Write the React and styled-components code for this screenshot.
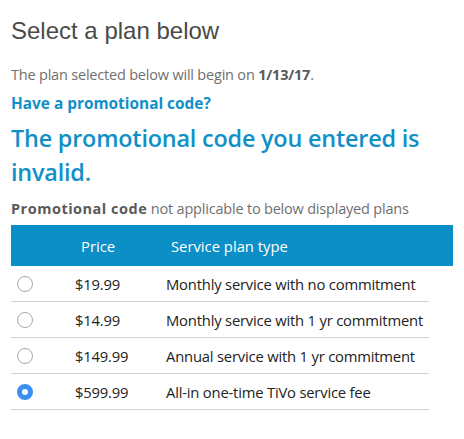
import React, { useState } from "react";
import styled, { createGlobalStyle } from "styled-components";

const PLANS = [
  { id: "m0", price: "$19.99", type: "Monthly service with no commitment" },
  { id: "m1", price: "$14.99", type: "Monthly service with 1 yr commitment" },
  { id: "a1", price: "$149.99", type: "Annual service with 1 yr commitment" },
  { id: "all", price: "$599.99", type: "All-in one-time TiVo service fee" },
];

const GlobalStyle = createGlobalStyle`
  body {
    margin: 0;
    background: #ffffff;
    font-family: "Open Sans", "Liberation Sans", sans-serif;
  }
`;

const Page = styled.div`
  padding: 15px 11px 0 11px;
`;

const Title = styled.h1`
  margin: 0;
  font-family: "Liberation Sans", Arial, sans-serif;
  font-weight: 400;
  font-size: 24px;
  line-height: 32px;
  color: #4a4a4a;
`;

const Note = styled.p`
  margin: ${(p) => p.$top}px 0 0 0;
  font-size: 14.5px;
  line-height: 20px;
  color: #707070;
  letter-spacing: -0.2px;

  b {
    color: #5a5a5a;
    font-weight: 700;
    letter-spacing: ${(p) => (p.$wideBold ? "0.5px" : "-0.2px")};
  }
`;

const PromoLink = styled.a`
  display: block;
  margin-top: 9px;
  font-size: 15.4px;
  line-height: 20px;
  font-weight: 700;
  color: #1190c8;
  text-decoration: none;
`;

const Error = styled.h2`
  margin: 7px 0 0 0;
  font-size: 23.4px;
  line-height: 34px;
  font-weight: 600;
  color: #1190c8;
  letter-spacing: -0.2px;
`;

const Table = styled.div`
  margin-top: 6px;
  width: 442px;
`;

const Head = styled.div`
  display: grid;
  grid-template-columns: 70px 90px 1fr;
  align-items: center;
  height: 41px;
  background: #0b8fc6;
  color: #ffffff;
  font-size: 14.8px;
`;

const Row = styled.label`
  display: grid;
  grid-template-columns: 64px 91px 1fr;
  align-items: center;
  height: 35px;
  width: 418px;
  border-bottom: 1px solid #d4d4d4;
  font-size: 14.8px;
  color: #222222;
  letter-spacing: -0.2px;
  cursor: pointer;
`;

const Radio = styled.span`
  width: 16px;
  height: 16px;
  margin-left: 6px;
  box-sizing: border-box;
  border-radius: 50%;
  border: ${(p) => (p.$on ? "5px solid #3a8ff5" : "1px solid #a8a8a8")};
  background: #ffffff;
`;

export default function App() {
  const [plan, setPlan] = useState("all");
  return (
    <Page>
      <GlobalStyle />
      <Title>Select a plan below</Title>
      <Note $top={18}>
        The plan selected below will begin on <b>1/13/17</b>.
      </Note>
      <PromoLink href="#">Have a promotional code?</PromoLink>
      <Error>The promotional code you entered is invalid.</Error>
      <Note $top={10} $wideBold>
        <b>Promotional code</b> not applicable to below displayed plans
      </Note>
      <Table>
        <Head>
          <span />
          <span>Price</span>
          <span>Service plan type</span>
        </Head>
        {PLANS.map((p) => (
          <Row key={p.id} onClick={() => setPlan(p.id)}>
            <Radio $on={plan === p.id} />
            <span>{p.price}</span>
            <span>{p.type}</span>
          </Row>
        ))}
      </Table>
    </Page>
  );
}
